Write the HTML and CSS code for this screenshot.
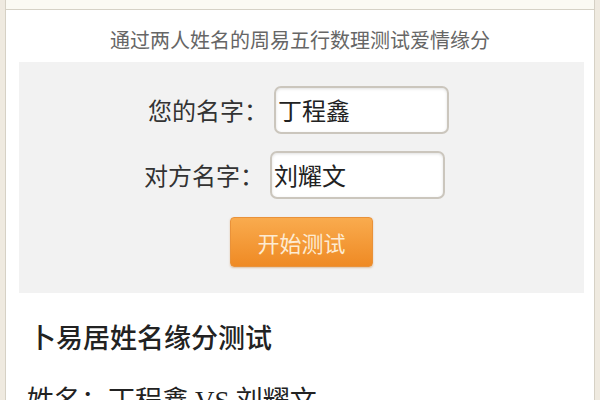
FILE: index.html
```html
<!DOCTYPE html>
<html lang="zh-CN">
<head>
<meta charset="utf-8">
<title>姓名缘分测试</title>
<link rel="stylesheet" href="styles.css">
</head>
<body>
<div class="page">
  <div class="top-strip"></div>
  <p class="subtitle">通过两人姓名的周易五行数理测试爱情缘分</p>
  <div class="panel">
    <div class="row row-one">
      <span class="label">您的名字：</span>
      <div class="field">丁程鑫</div>
    </div>
    <div class="row row-two">
      <span class="label">对方名字：</span>
      <div class="field">刘耀文</div>
    </div>
    <div class="btn-row">
      <div class="btn">开始测试</div>
    </div>
  </div>
  <h2 class="title">卜易居姓名缘分测试</h2>
  <p class="result">姓名：丁程鑫 <span class="vs">VS</span> 刘耀文</p>
</div>
</body>
</html>
```
FILE: styles.css
```css
* { box-sizing: border-box; }
html, body { margin: 0; padding: 0; }
body {
  background: #efeae0;
  font-family: "Noto Sans CJK SC", "Noto Sans", sans-serif;
  height: 400px;
  overflow: hidden;
}
.page {
  margin: 0 5px;
  background: #ffffff;
  border-left: 1px solid #d6d1c5;
  border-right: 1px solid #d6d1c5;
  height: 400px;
  overflow: hidden;
}
.top-strip {
  height: 10px;
  background: #fbfaf3;
  border-bottom: 1px solid #d6d2c6;
}
.subtitle {
  margin: 0;
  padding-top: 15px;
  height: 52px;
  font-size: 20px;
  line-height: 30px;
  color: #666;
  text-align: center;
}
.panel {
  margin: 0 10px 0 13px;
  background: #f2f2f2;
  padding: 24px 0 26px;
  display: flex;
  flex-direction: column;
  align-items: center;
}
.row {
  display: flex;
  align-items: center;
  height: 48px;
}
.row-one { margin-right: 6px; }
.row-two { margin-top: 17px; margin-right: 14px; }
.label {
  font-size: 24px;
  color: #333;
  margin-right: 6px;
  line-height: 48px;
}
.field {
  width: 175px;
  height: 48px;
  border: 2px solid #cbc6bd;
  border-radius: 7px;
  background: #fff;
  box-shadow: inset 0 1px 3px rgba(0,0,0,0.12);
  font-size: 24px;
  line-height: 44px;
  padding-left: 2px;
  color: #222;
}
.btn-row {
  margin-top: 18px;
  display: flex;
  justify-content: center;
}
.btn {
  width: 143px;
  height: 50px;
  border-radius: 4px;
  background: linear-gradient(#f9ab4e, #ef8a24);
  border: 1px solid #e9923a;
  box-shadow: 0 1px 2px rgba(180,100,20,0.35);
  color: #fdebd2;
  font-size: 22px;
  line-height: 48px;
  text-align: center;
}
.title {
  margin: 26px 0 0 23px;
  font-size: 27px;
  line-height: 36px;
  font-weight: 500;
  color: #222;
}
.result {
  margin: 26px 0 0 21px;
  font-size: 27px;
  line-height: 36px;
  color: #222;
}
.vs {
  font-family: "Liberation Serif", serif;
}
```
